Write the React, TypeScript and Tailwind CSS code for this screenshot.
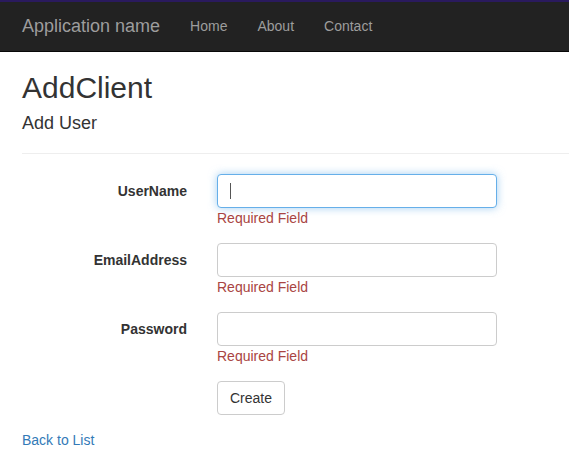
export default function App() {
  const fields = [
    { label: "UserName", focus: true },
    { label: "EmailAddress", focus: false },
    { label: "Password", focus: false },
  ];
  return (
    <div className="min-h-[467px] overflow-hidden bg-white font-['Liberation_Sans',Arial,sans-serif] text-[14px] leading-[20px] text-[#333]">
      <nav className="flex h-[52px] items-center border-b border-[#080808] border-t-2 border-t-[#2a1a5e] bg-[#222] pb-[1px] pl-[22px]">
        <span className="text-[18px] text-[#9d9d9d]">Application name</span>
        <div className="ml-[30px] flex gap-[30px] text-[#9d9d9d]">
          <span>Home</span>
          <span>About</span>
          <span>Contact</span>
        </div>
      </nav>
      <main className="pl-[22px]">
        <h2 className="mt-[19px] text-[30px] leading-[33px]">AddClient</h2>
        <h4 className="mt-[9px] text-[18px] leading-[20px]">Add User</h4>
        <hr className="mt-[20px] border-[#eee]" />
        <div className="mt-[20px] flex flex-col">
          {fields.map((f) => (
            <div key={f.label} className="mb-[15px] flex">
              <label className="w-[165px] pt-[7px] text-right font-bold">{f.label}</label>
              <div className="ml-[30px] w-[280px]">
                <div className={"flex h-[34px] items-center rounded-[4px] border bg-white px-3 " + (f.focus ? "border-[#66afe9] shadow-[0_0_8px_rgba(102,175,233,0.6)]" : "border-[#ccc]")}>
                  {f.focus && <span className="h-[16px] w-px bg-[#555]" />}
                </div>
                <div className="text-[#a94442]">Required Field</div>
              </div>
            </div>
          ))}
          <div className="ml-[195px]">
            <button className="h-[34px] rounded-[4px] border border-[#ccc] bg-white px-3 text-[#333]">Create</button>
          </div>
        </div>
        <a className="mt-[15px] block text-[#337ab7]">Back to List</a>
      </main>
    </div>
  );
}
